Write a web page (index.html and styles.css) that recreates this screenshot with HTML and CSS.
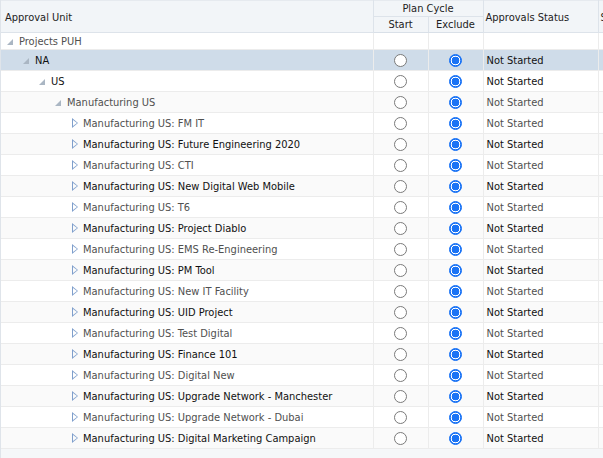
FILE: index.html
```html
<!DOCTYPE html>
<html>
<head>
<meta charset="utf-8">
<link rel="stylesheet" href="styles.css">
</head>
<body>
<div class="grid">
<table class="tbl">
  <colgroup>
    <col class="c-unit"><col class="c-radio"><col class="c-radio"><col class="c-status"><col class="c-more">
  </colgroup>
  <thead>
    <tr class="h1">
      <th rowspan="2" class="h-unit">Approval Unit</th>
      <th colspan="2" class="h-center h-plan">Plan Cycle</th>
      <th rowspan="2" class="h-status">Approvals Status</th>
      <th rowspan="2" class="h-more">S</th>
    </tr>
    <tr class="h2">
      <th class="h-center">Start</th>
      <th class="h-center">Exclude</th>
    </tr>
  </thead>
  <tbody>
    <tr class="r-top g"><td><span class="lv l0"><i class="exp"></i>Projects PUH</span></td><td></td><td></td><td></td><td></td></tr>
    <tr class="sel d"><td><span class="lv l1"><i class="exp"></i>NA</span></td><td class="rc"><i class="rb"></i></td><td class="rc"><i class="rb on"></i></td><td>Not Started</td><td></td></tr>
    <tr class="d"><td><span class="lv l2"><i class="exp"></i>US</span></td><td class="rc"><i class="rb"></i></td><td class="rc"><i class="rb on"></i></td><td>Not Started</td><td></td></tr>
    <tr class="g alt"><td><span class="lv l3"><i class="exp"></i>Manufacturing US</span></td><td class="rc"><i class="rb"></i></td><td class="rc"><i class="rb on"></i></td><td>Not Started</td><td></td></tr>
    <tr class="g"><td><span class="lv l4"><i class="col"></i>Manufacturing US: FM IT</span></td><td class="rc"><i class="rb"></i></td><td class="rc"><i class="rb on"></i></td><td>Not Started</td><td></td></tr>
    <tr class="d alt"><td><span class="lv l4"><i class="col"></i>Manufacturing US: Future Engineering 2020</span></td><td class="rc"><i class="rb"></i></td><td class="rc"><i class="rb on"></i></td><td>Not Started</td><td></td></tr>
    <tr class="g"><td><span class="lv l4"><i class="col"></i>Manufacturing US: CTI</span></td><td class="rc"><i class="rb"></i></td><td class="rc"><i class="rb on"></i></td><td>Not Started</td><td></td></tr>
    <tr class="d alt"><td><span class="lv l4"><i class="col"></i>Manufacturing US: New Digital Web Mobile</span></td><td class="rc"><i class="rb"></i></td><td class="rc"><i class="rb on"></i></td><td>Not Started</td><td></td></tr>
    <tr class="g"><td><span class="lv l4"><i class="col"></i>Manufacturing US: T6</span></td><td class="rc"><i class="rb"></i></td><td class="rc"><i class="rb on"></i></td><td>Not Started</td><td></td></tr>
    <tr class="d alt"><td><span class="lv l4"><i class="col"></i>Manufacturing US: Project Diablo</span></td><td class="rc"><i class="rb"></i></td><td class="rc"><i class="rb on"></i></td><td>Not Started</td><td></td></tr>
    <tr class="g"><td><span class="lv l4"><i class="col"></i>Manufacturing US: EMS Re-Engineering</span></td><td class="rc"><i class="rb"></i></td><td class="rc"><i class="rb on"></i></td><td>Not Started</td><td></td></tr>
    <tr class="d alt"><td><span class="lv l4"><i class="col"></i>Manufacturing US: PM Tool</span></td><td class="rc"><i class="rb"></i></td><td class="rc"><i class="rb on"></i></td><td>Not Started</td><td></td></tr>
    <tr class="g"><td><span class="lv l4"><i class="col"></i>Manufacturing US: New IT Facility</span></td><td class="rc"><i class="rb"></i></td><td class="rc"><i class="rb on"></i></td><td>Not Started</td><td></td></tr>
    <tr class="d alt"><td><span class="lv l4"><i class="col"></i>Manufacturing US: UID Project</span></td><td class="rc"><i class="rb"></i></td><td class="rc"><i class="rb on"></i></td><td>Not Started</td><td></td></tr>
    <tr class="g"><td><span class="lv l4"><i class="col"></i>Manufacturing US: Test Digital</span></td><td class="rc"><i class="rb"></i></td><td class="rc"><i class="rb on"></i></td><td>Not Started</td><td></td></tr>
    <tr class="d alt"><td><span class="lv l4"><i class="col"></i>Manufacturing US: Finance 101</span></td><td class="rc"><i class="rb"></i></td><td class="rc"><i class="rb on"></i></td><td>Not Started</td><td></td></tr>
    <tr class="g"><td><span class="lv l4"><i class="col"></i>Manufacturing US: Digital New</span></td><td class="rc"><i class="rb"></i></td><td class="rc"><i class="rb on"></i></td><td>Not Started</td><td></td></tr>
    <tr class="d alt"><td><span class="lv l4"><i class="col"></i>Manufacturing US: Upgrade Network - Manchester</span></td><td class="rc"><i class="rb"></i></td><td class="rc"><i class="rb on"></i></td><td>Not Started</td><td></td></tr>
    <tr class="g"><td><span class="lv l4"><i class="col"></i>Manufacturing US: Upgrade Network - Dubai</span></td><td class="rc"><i class="rb"></i></td><td class="rc"><i class="rb on"></i></td><td>Not Started</td><td></td></tr>
    <tr class="d alt"><td><span class="lv l4"><i class="col"></i>Manufacturing US: Digital Marketing Campaign</span></td><td class="rc"><i class="rb"></i></td><td class="rc"><i class="rb on"></i></td><td>Not Started</td><td></td></tr>
  </tbody>
</table>
</div>
</body>
</html>
```
FILE: styles.css
```css
html, body {
  margin: 0;
  padding: 0;
  background: #f5f7f9;
  overflow: hidden;
}
.grid {
  width: 603px;
  height: 458px;
  overflow: hidden;
  border-left: 1px solid #dfe4ea;
  box-sizing: border-box;
  background: #f5f7f9;
}
.tbl {
  border-collapse: collapse;
  table-layout: fixed;
  width: 700px;
  font-family: "DejaVu Sans Condensed", "Liberation Sans", sans-serif;
  font-size: 11px;
  color: #222;
}
.c-unit { width: 372px; }
.c-radio { width: 55px; }
.c-status { width: 115px; }
.c-more { width: 103px; }

thead th {
  background: #f2f5f8;
  font-weight: normal;
  color: #222;
  border: 1px solid #dde3ea;
  border-top: 1px solid #e6eaef;
  padding: 0;
  white-space: nowrap;
  overflow: hidden;
}
.h1 { height: 16px; }
.h2 { height: 16px; }
.h-unit { text-align: left; padding: 2px 0 0 4px; border-left: none; }
.h-status { text-align: left; padding: 2px 0 0 2px; }
.h-more { text-align: left; padding: 2px 0 0 2px; }
.h-center { text-align: center; }
thead tr:last-child th { border-bottom: 1px solid #d9e0e8; }

tbody td {
  background: #fff;
  border-bottom: 1px solid #ececec;
  border-right: 1px solid #ececec;
  padding: 0;
  height: 20px;
  white-space: nowrap;
  overflow: hidden;
  vertical-align: middle;
}
tbody td:nth-child(4) { padding-left: 3px; }
tbody tr.alt td { background: #fafafa; }
tbody tr.sel td { background: #cfdce9; }
tbody tr.r-top td { height: 16px; }
tr.g td { color: #505050; }
tr.d td { color: #111; }

.lv { display: flex; align-items: center; }
.l0 { padding-left: 6px; }
.l1 { padding-left: 22px; }
.l2 { padding-left: 38px; }
.l3 { padding-left: 54px; }
.l4 { padding-left: 70px; }

.exp {
  display: inline-block;
  width: 0;
  height: 0;
  border-style: solid;
  border-width: 0 0 6px 6px;
  border-color: transparent transparent #aab6c3 transparent;
  margin-right: 6px;
  margin-left: 0;
  margin-top: 1px;
}
.col {
  position: relative;
  display: inline-block;
  width: 0;
  height: 0;
  border-style: solid;
  border-width: 5px 0 5px 6px;
  border-color: transparent transparent transparent #7f9fcc;
  margin-right: 5px;
  margin-left: 1px;
}
.col::after {
  content: "";
  position: absolute;
  left: -5px;
  top: -3px;
  border-style: solid;
  border-width: 3px 0 3px 4px;
  border-color: transparent transparent transparent #fff;
}
tr.alt .col::after { border-left-color: #fafafa; }

.rc { text-align: center; }
.rb {
  display: inline-block;
  box-sizing: border-box;
  width: 13px;
  height: 13px;
  border-radius: 50%;
  border: 1px solid #7a7a7a;
  background: #fff;
  vertical-align: middle;
  margin-top: -1px;
}
.rb.on {
  border: 1px solid #1a73f5;
  background: radial-gradient(circle, #1a73f5 0 3.6px, #fff 4.1px 4.6px, #1a73f5 5.1px);
}
```
